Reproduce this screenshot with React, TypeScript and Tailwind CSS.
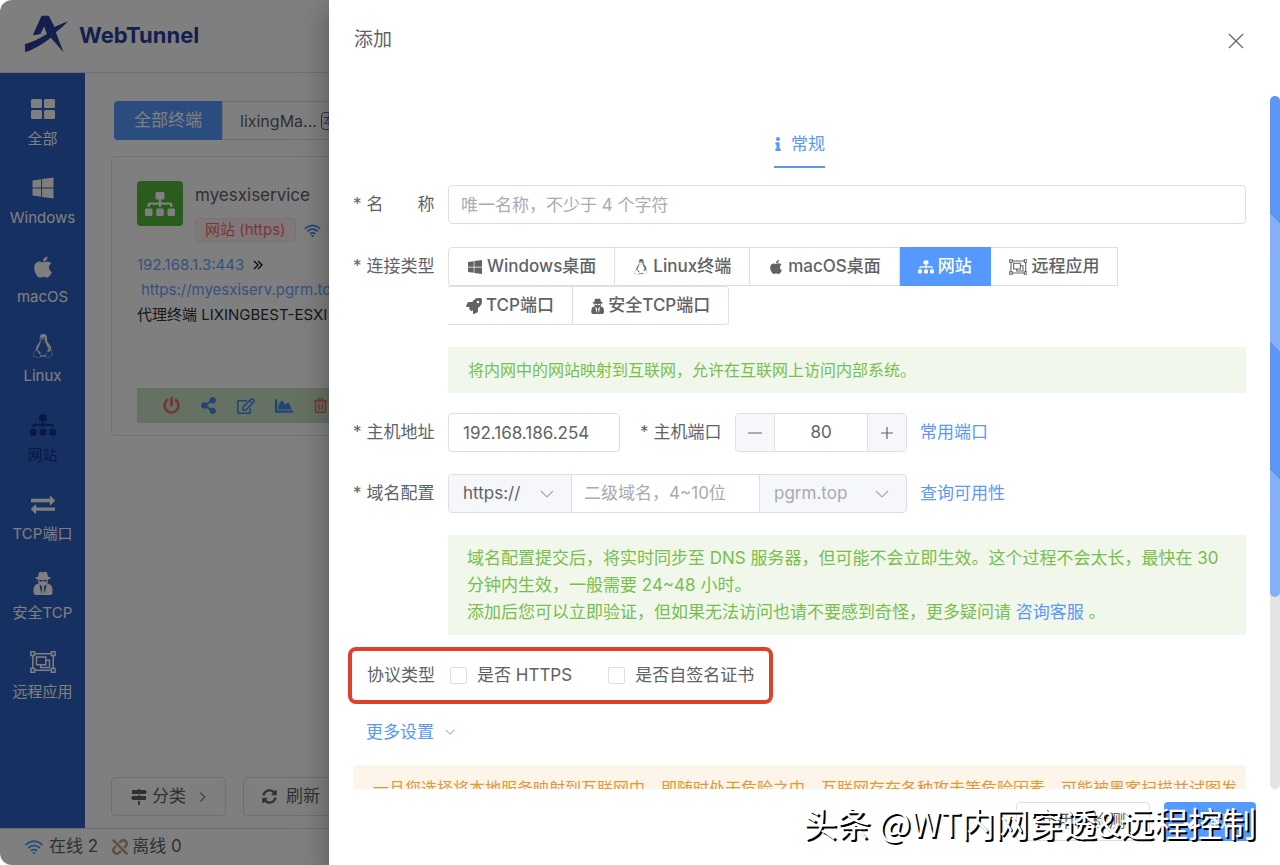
import React, { useState } from "react";
import {
  FaApple, FaChartArea, FaCheck, FaInfo, FaLinux, FaMapSigns, FaPowerOff, FaRegEdit, FaRegTrashAlt,
  FaRocket, FaShareAlt, FaSitemap, FaSyncAlt, FaUnlink, FaWindows,
} from "react-icons/fa";

type IconProps = { className?: string };

function LogoMark({ className }: IconProps) {
  return (
    <svg viewBox="72 46 134 114" className={className} fill="currentColor">
      <path d="M124 48h22l17 34q20-9 41-17-18 19-37 33l23 60-38-44q-34 28-77 44l-1-24q37-12 66-31l-8-23-11 23q-10 2-23 4z" />
    </svg>
  );
}

function GridIcon({ className }: IconProps) {
  return (
    <svg viewBox="0 0 26 24" className={className} fill="currentColor">
      <rect x="1" y="2" width="11" height="9" rx="1.500" />
      <rect x="14" y="2" width="11" height="9" rx="1.500" />
      <rect x="1" y="13" width="11" height="9" rx="1.500" />
      <rect x="14" y="13" width="11" height="9" rx="1.500" />
    </svg>
  );
}

function SpyIcon({ className }: IconProps) {
  return (
    <svg viewBox="0 0 20 24" className={className} fill="currentColor" fillRule="evenodd">
      <path d="M6 1.500q1.500-1.500 4 0 2.500-1.500 4 0l1 4.200q2.500.5 2.800 1.300-.5 1.200-3 1.500v1.600q0 1.700-.7 2.400 5.400.8 5.400 6.500v2.500q0 2.500-2.500 2.500H3Q.5 24 .5 21.500V19q0-5.700 5.400-6.500-.7-.7-.7-2.400V8.500q-2.500-.3-3-1.500.3-.8 2.800-1.300zM6 8.800q.2 2 1.800 2 1.300 0 1.700-1.300h1q.4 1.300 1.700 1.300 1.600 0 1.800-2-4 .6-8 0zM6.500 13.500l1.700 9.200 1-6-.8-2zM13.500 13.500l-1.700 9.200-1-6 .8-2z" />
    </svg>
  );
}

function WifiIcon({ className }: IconProps) {
  return (
    <svg viewBox="0 0 24 20" className={className} fill="none" stroke="currentColor" strokeWidth="2.300">
      <path d="M1.200 7.500q10.800-9.400 21.600 0M4.700 11.200q7.300-6.200 14.600 0M8.200 14.800q3.800-3 7.600 0" />
      <path d="M9.700 17q2.300-1.600 4.600 0L12 19.500z" fill="currentColor" stroke="none" />
    </svg>
  );
}

function ExchangeIcon({ className }: IconProps) {
  return (
    <svg viewBox="0 0 1792 1792" className={className} fill="currentColor">
      <path d="M1792 1184v192q0 13-9.5 22.5t-22.5 9.5h-1376v192q0 13-9.5 22.5t-22.5 9.5q-12 0-24-10l-319-320q-9-9-9-22 0-14 9-23l320-320q9-9 23-9 13 0 22.5 9.5t9.5 22.5v192h1376q13 0 22.5 9.5t9.5 22.5zm0-544q0 14-9 23l-320 320q-9 9-23 9-13 0-22.5-9.5t-9.5-22.5v-192h-1376q-13 0-22.5-9.5t-9.5-22.5v-192q0-13 9.5-22.5t22.5-9.5h1376v-192q0-14 9-23t23-9q12 0 24 10l319 319q9 9 9 23z" />
    </svg>
  );
}

function ObjectGroupIcon({ className }: IconProps) {
  return (
    <svg viewBox="0 0 28 24" className={className} fill="none" stroke="currentColor" strokeWidth="1.6">
      <path d="M5 3h18M5 21h18M3 5v14M25 5v14" />
      <path d="M1 1h4v4H1zM23 1h4v4h-4zM1 19h4v4H1zM23 19h4v4h-4z" />
      <path d="M7 6.500h10v8.500H7zM17 10h4v8h-9.500v-3" />
    </svg>
  );
}

function Chevron({ className, d = "M2 5l6 6 6-6" }: IconProps & { d?: string }) {
  return (
    <svg viewBox="0 0 16 16" className={className} fill="none" stroke="currentColor" strokeWidth="1.2">
      <path d={d} />
    </svg>
  );
}

const NAV = [
  { label: "全部", icon: GridIcon },
  { label: "Windows", icon: FaWindows },
  { label: "macOS", icon: FaApple },
  { label: "Linux", icon: FaLinux },
  { label: "网站", icon: FaSitemap, active: true },
  { label: "TCP端口", icon: ExchangeIcon },
  { label: "安全TCP", icon: SpyIcon },
  { label: "远程应用", icon: ObjectGroupIcon },
];

const TYPES = [
  { label: "Windows桌面", icon: FaWindows, shape: "border-l rounded-l" },
  { label: "Linux终端", icon: FaLinux, shape: "" },
  { label: "macOS桌面", icon: FaApple, shape: "" },
  { label: "网站", icon: FaSitemap, shape: "" },
  { label: "远程应用", icon: ObjectGroupIcon, shape: "" },
  { label: "TCP端口", icon: FaRocket, shape: "" },
  { label: "安全TCP端口", icon: SpyIcon, shape: "rounded-r" },
];

function Sidebar() {
  return (
    <nav className="w-[85px] shrink-0 bg-[#2c62c2] pt-3">
      {NAV.map(({ label, icon: Icon, active }) => (
        <a
          key={label}
          href="#"
          className={`flex h-[79px] flex-col items-center pt-3 text-[15px] ${active ? "text-[#15308f]" : "text-white"}`}
        >
          <Icon className="h-6 w-[26px]" />
          <span className="mt-1 leading-7 whitespace-nowrap">{label}</span>
        </a>
      ))}
    </nav>
  );
}

function ServiceCard() {
  return (
    <div className="h-[280px] w-[420px] rounded border border-[#e4e7ed] px-[25px] pt-6">
      <div className="flex">
        <div className="flex h-[45px] w-[46px] items-center justify-center rounded-sm bg-[#55bb3a] text-white">
          <FaSitemap className="h-7 w-[30px]" />
        </div>
        <div className="ml-3">
          <div className="text-[17px] leading-7 text-[#606266]">myesxiservice</div>
          <div className="mt-[9px] flex items-center gap-2">
            <span className="rounded border border-[#fde2e2] bg-[#fef0f0] px-[9px] text-[15px] leading-[22px] text-[#f56c6c]">网站 (https)</span>
            <WifiIcon className="h-[15px] w-[17px] text-[#4187f2]" />
          </div>
        </div>
      </div>
      <div className="mt-[10px] text-[15px] leading-[25px] whitespace-nowrap">
        <div className="flex items-center">
          <a href="#" className="text-[#6fa2f8]">192.168.1.3:443</a>
          <Chevron className="ml-[6px] size-4 text-black" d="M4 4l4 4-4 4M8 4l4 4-4 4" />
        </div>
        <a href="#" className="ml-1 block text-[#6fa2f8]">https://myesxiserv.pgrm.top</a>
        <div className="text-[#303133]">代理终端 LIXINGBEST-ESXI</div>
      </div>
      <div className="mt-[61px] flex h-[35px] items-center gap-5 bg-[#cbe2c6] pl-[26px]">
        <FaPowerOff className="size-[17px] text-[#e56c6c]" />
        <FaShareAlt className="size-[17px] text-[#4187f2]" />
        <FaRegEdit className="size-[18px] text-[#4187f2]" />
        <FaChartArea className="size-[18px] text-[#4187f2]" />
        <FaRegTrashAlt className="size-[15px] text-[#e56c6c]" />
      </div>
    </div>
  );
}

function Dashboard() {
  return (
    <div className="flex h-full flex-col bg-white text-[#606266]">
      <header className="flex h-[73px] shrink-0 items-center border-b border-[#dcdfe6] pl-6 pb-1">
        <LogoMark className="h-[38px] w-[45px] text-[#2a3f9c]" />
        <h1 className="ml-[10px] pt-[2px] text-[22px] font-bold text-[#2a3f9c]">WebTunnel</h1>
      </header>
      <div className="flex min-h-0 flex-1">
        <Sidebar />
        <main className="flex min-w-0 flex-1 flex-col overflow-hidden px-[26px] pt-7">
          <div className="mb-4 ml-[3px] flex h-[39px] text-[17px] whitespace-nowrap">
            <button className="w-[108px] rounded-l bg-[#5599ff] text-white">全部终端</button>
            <button className="flex w-[200px] items-center gap-1 rounded-r border border-[#dcdfe6] pl-[17px] text-base">
              lixingMa...
              <span className="rounded-sm border border-[#4064c0] px-px text-xs leading-4 text-[#4064c0]">本</span>
            </button>
          </div>
          <ServiceCard />
          <div className="mt-auto mb-3 flex h-[39px] gap-[17px] text-[17px] whitespace-nowrap">
            <button className="flex w-[115px] items-center rounded border border-[#dcdfe6] pl-[19px]">
              <FaMapSigns className="size-4" />
              <span className="ml-[5px]">分类</span>
              <Chevron className="ml-[10px] size-[14px]" d="M5 3l5 5-5 5" />
            </button>
            <button className="flex w-[120px] items-center gap-[9px] rounded border border-[#dcdfe6] pl-[18px]">
              <FaSyncAlt className="size-[15px]" />
              刷新
            </button>
          </div>
        </main>
      </div>
      <footer className="flex h-[37px] shrink-0 items-center border-t border-[#dcdfe6] pl-6 text-[17px]">
        <WifiIcon className="h-4 w-5 text-[#5a96fa]" />
        <span className="ml-[5px]">在线 2</span>
        <FaUnlink className="ml-[14px] size-4 text-[#c09a90]" />
        <span className="ml-1">离线 0</span>
      </footer>
    </div>
  );
}

function Label({ htmlFor, children }: { htmlFor?: string; children: React.ReactNode }) {
  return (
    <label htmlFor={htmlFor} className="flex w-[95px] shrink-0 gap-[5px] leading-[39px] whitespace-nowrap">
      <span>*</span>
      <span className="flex w-[68px] justify-between">{children}</span>
    </label>
  );
}

function ScrollBar() {
  return (
    <div className="absolute top-[15px] right-0 bottom-0 w-[10px] rounded-full bg-[#e4e4e4]">
      <div className="h-[501px] rounded-full bg-[#5c96f5] bg-[linear-gradient(45deg,#ffffff40_25%,transparent_25%,transparent_50%,#ffffff40_50%,#ffffff40_75%,transparent_75%)]" />
    </div>
  );
}

function ServiceForm() {
  const [type, setType] = useState("网站");
  const [port, setPort] = useState(80);

  return (
    <form className="pr-[34px] pl-6 text-[17px]">
      <div className="mt-[45px] flex justify-center">
        <button type="button" className="flex h-[42px] items-start gap-[9px] border-b-2 border-[#5a98f5] text-[#5a98f5]">
          <FaInfo className="mt-[11px] h-[14px] w-2" />
          <span className="mt-[5px] leading-[26px]">常规</span>
        </button>
      </div>

      <div className="mt-[17px] flex">
        <Label htmlFor="name"><span>名</span><span>称</span></Label>
        <input
          id="name"
          placeholder="唯一名称，不少于 4 个字符"
          className="h-[39px] min-w-0 flex-1 rounded border border-[#dcdfe6] px-3 placeholder:text-[#a8abb2]"
        />
      </div>

      <div className="mt-[23px] flex">
        <Label>连接类型</Label>
        <div className="flex w-[700px] flex-wrap">
          {TYPES.map(({ label, icon: Icon, shape }) => (
            <button
              key={label}
              type="button"
              onClick={() => setType(label)}
              className={`flex h-[39px] items-center gap-1 border-y border-r px-[18px] font-medium ${shape} ${
                type === label ? "border-[#5599ff] bg-[#5599ff] text-white" : "border-[#dcdfe6]"
              }`}
            >
              <Icon className="h-4 w-auto" />
              {label}
            </button>
          ))}
        </div>
      </div>

      <div className="mt-[22px] ml-[95px] bg-[#f1f7eb] px-5 py-[10px] text-base leading-[26px] text-[#78be4e]">
        将内网中的网站映射到互联网，允许在互联网上访问内部系统。
      </div>

      <div className="mt-5 flex">
        <Label htmlFor="host">主机地址</Label>
        <input id="host" defaultValue="192.168.186.254" className="h-[39px] w-[172px] rounded border border-[#dcdfe6] px-[14px]" />
        <span className="ml-5"><Label htmlFor="port">主机端口</Label></span>
        <div className="flex h-[39px] w-[172px] overflow-hidden rounded border border-[#dcdfe6]">
          <button type="button" aria-label="减少" onClick={() => setPort(port - 1)} className="flex w-[39px] items-center justify-center border-r border-[#dcdfe6] bg-[#f5f7fa]">
            <Chevron className="size-4" d="M1 8h14" />
          </button>
          <input id="port" value={port} onChange={(e) => setPort(Number(e.target.value))} className="min-w-0 flex-1 text-center" />
          <button type="button" aria-label="增加" onClick={() => setPort(port + 1)} className="flex w-[39px] items-center justify-center border-l border-[#dcdfe6] bg-[#f5f7fa]">
            <Chevron className="size-4" d="M2 8h12M8 2v12" />
          </button>
        </div>
        <a href="#" className="ml-[13px] leading-[39px] text-[#5a98f5]">常用端口</a>
      </div>

      <div className="mt-[22px] flex">
        <Label htmlFor="domain">域名配置</Label>
        <div className="flex h-[39px] w-[459px] overflow-hidden rounded border border-[#dcdfe6]">
          <div className="relative w-[123px] border-r border-[#dcdfe6] bg-[#f5f7fa]">
            <select aria-label="协议" className="h-full w-full appearance-none pl-[14px]">
              <option>https://</option>
              <option>http://</option>
            </select>
            <Chevron className="pointer-events-none absolute top-[11px] right-4 size-4 text-[#a8abb2]" />
          </div>
          <input id="domain" placeholder="二级域名，4~10位" className="min-w-0 flex-1 px-3 placeholder:text-[#a8abb2]" />
          <div className="relative w-[147px] border-l border-[#dcdfe6] bg-[#f5f7fa]">
            <select aria-label="域名" className="h-full w-full appearance-none pl-[14px] text-[#a8abb2]">
              <option>pgrm.top</option>
            </select>
            <Chevron className="pointer-events-none absolute top-[11px] right-4 size-4 text-[#a8abb2]" />
          </div>
        </div>
        <a href="#" className="ml-[13px] leading-[39px] text-[#5a98f5]">查询可用性</a>
      </div>

      <div className="mt-[22px] ml-[95px] bg-[#f1f7eb] px-[19px] pt-[10px] pb-[9px] leading-[27px] text-[#78be4e]">
        域名配置提交后，将实时同步至 DNS 服务器，但可能不会立即生效。这个过程不会太长，最快在 30 分钟内生效，一般需要 24~48 小时。
        <br />
        添加后您可以立即验证，但如果无法访问也请不要感到奇怪，更多疑问请 <a href="#" className="text-[#5a98f5]">咨询客服</a> 。
      </div>

      <fieldset className="mt-3 -ml-[5px] flex h-[57px] w-[425px] items-center rounded-lg border-4 border-[#e0402a] pl-[15px] whitespace-nowrap">
        <span>协议类型</span>
        <label className="ml-[15px] flex items-center gap-[10px]">
          <input type="checkbox" className="size-[17px] appearance-none rounded-xs border border-[#dcdfe6] checked:bg-[#5599ff]" />
          是否 HTTPS
        </label>
        <label className="ml-9 flex items-center gap-[10px]">
          <input type="checkbox" className="size-[17px] appearance-none rounded-xs border border-[#dcdfe6] checked:bg-[#5599ff]" />
          是否自签名证书
        </label>
      </fieldset>

      <button type="button" className="mt-4 ml-[13px] flex items-center gap-[10px] leading-6 text-[#5a98f5]">
        更多设置
        <Chevron className="size-3" />
      </button>

      <div className="mt-[21px] rounded bg-[#fdf4ea] py-[10px] pr-1 pl-5 text-base leading-[26px] text-[#dd9a3c]">
        一旦您选择将本地服务映射到互联网中，即随时处于危险之中，互联网存在各种攻击等危险因素，可能被黑客扫描并试图发起攻击。
      </div>
    </form>
  );
}

function Drawer() {
  return (
    <aside className="absolute inset-y-0 right-0 left-[329px] flex flex-col bg-white text-[#606266] shadow-[0_8px_10px_-5px_#00000033,0_16px_24px_2px_#00000024,0_6px_30px_5px_#0000001f]">
      <header className="flex h-[81px] shrink-0 items-center justify-between pr-9 pl-[25px]">
        <h2 className="text-[19px]">添加</h2>
        <button aria-label="关闭">
          <Chevron className="size-4" d="M1 1l14 14M15 1L1 15" />
        </button>
      </header>
      <div className="relative min-h-0 flex-1 overflow-hidden">
        <ServiceForm />
        <ScrollBar />
      </div>
      <footer className="relative flex h-[76px] shrink-0 justify-end gap-[14px] pt-[13px] pr-6 text-[17px]">
        <button className="h-[39px] w-[134px] rounded border border-[#dcdfe6]">可用性检测</button>
        <button className="flex h-[39px] w-[92px] items-center justify-center gap-1 rounded bg-[#5599ff] text-white">
          <FaCheck className="size-4" />
          确定
        </button>
        <div className="pointer-events-none absolute top-[11px] right-6 font-['Noto_Sans_CJK_SC',sans-serif] text-[34px] leading-[46px] whitespace-nowrap text-white [text-shadow:2px_2px_0_#000]">
          头条 @WT内网穿透&远程控制
        </div>
      </footer>
    </aside>
  );
}

export default function App() {
  return (
    <div className="relative h-screen overflow-hidden rounded-l-xl font-[Inter,'Noto_Sans_CJK_SC',sans-serif]">
      <Dashboard />
      <div className="absolute inset-0 bg-black/50" />
      <Drawer />
    </div>
  );
}
